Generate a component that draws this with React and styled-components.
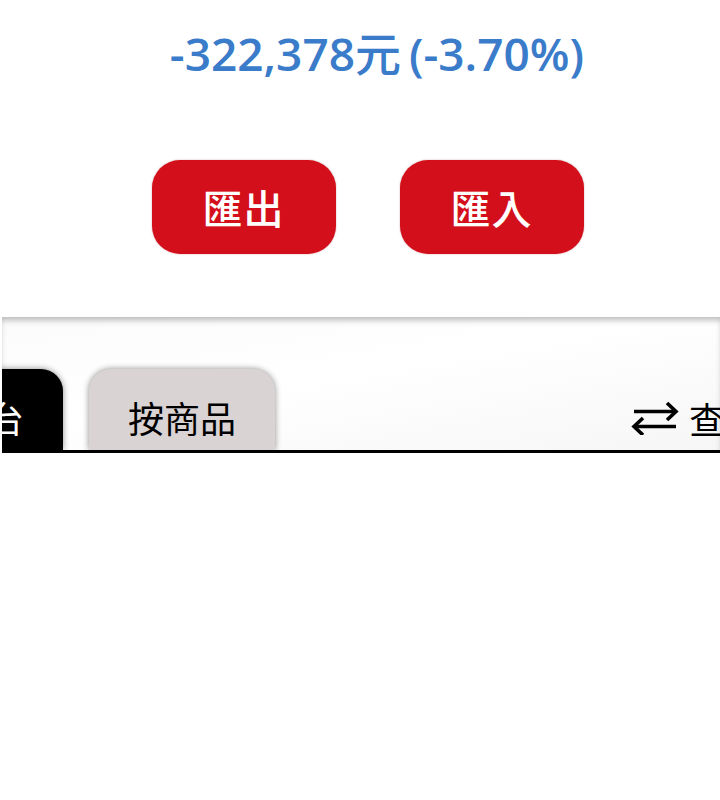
import styled, { createGlobalStyle } from 'styled-components';

const GlobalStyle = createGlobalStyle`
  html, body {
    margin: 0;
    padding: 0;
    background: #ffffff;
  }
  body {
    font-family: "Noto Sans CJK TC", "Noto Sans", sans-serif;
    overflow: hidden;
  }
`;

const Page = styled.div`
  width: 720px;
  height: 800px;
  display: flex;
  flex-direction: column;
  background: #ffffff;
`;

const Change = styled.div`
  margin-top: 25px;
  height: 56px;
  padding-left: 34px;
  text-align: center;
  font-family: "Open Sans", "Noto Sans CJK TC", sans-serif;
  font-weight: 600;
  font-size: 46px;
  line-height: 56px;
  color: #3a7cca;
  white-space: nowrap;
`;

const Unit = styled.span`
  font-family: "Noto Sans CJK TC", sans-serif;
  font-weight: 500;
  line-height: 1;
  margin-right: -4px;
`;

const ButtonRow = styled.div`
  margin-top: 79px;
  padding-left: 15px;
  display: flex;
  justify-content: center;
  gap: 64px;
`;

const RedButton = styled.button`
  width: 184px;
  height: 94px;
  border: none;
  border-radius: 28px;
  background: #d40f1c;
  color: #ffffff;
  font-family: "Noto Sans CJK TC", sans-serif;
  font-weight: 500;
  font-size: 40px;
  letter-spacing: 1px;
  padding: 0;
  display: flex;
  align-items: center;
  justify-content: center;
  box-shadow: 0 0 2px rgba(120, 0, 0, 0.35);
`;

const Strip = styled.div`
  margin-top: 63px;
  margin-left: 2px;
  height: 133px;
  display: flex;
  align-items: flex-end;
  overflow: hidden;
  background: linear-gradient(170deg, #fbfbfb 0%, #ffffff 45%, #f6f6f6 100%);
  box-shadow: inset 0 5px 6px -2px rgba(0, 0, 0, 0.28);
  border-bottom: 3px solid #000000;
`;

const Tab = styled.div`
  flex: none;
  width: 186px;
  height: 81px;
  margin-left: ${(p) => p.$offset || 0}px;
  border-radius: 22px 22px 0 0;
  background: ${(p) => (p.$active ? '#000000' : '#d9d3d4')};
  color: ${(p) => (p.$active ? '#ffffff' : '#000000')};
  box-shadow: 0 0 6px rgba(0, 0, 0, 0.45);
  display: flex;
  align-items: center;
  justify-content: center;
  font-family: "Noto Sans CJK TC", sans-serif;
  font-size: 36px;
  font-weight: 400;
  padding-top: 14px;
  box-sizing: border-box;
`;

const Switcher = styled.div`
  flex: none;
  margin-left: 356px;
  height: 81px;
  display: flex;
  align-items: center;
  gap: 10px;
  padding-top: 16px;
  box-sizing: border-box;
  font-family: "Noto Sans CJK TC", sans-serif;
  font-size: 36px;
  color: #000000;
  white-space: nowrap;
`;

const SwapIcon = () => (
  <svg width="48" height="34" viewBox="0 0 48 34" fill="none" stroke="#000" strokeWidth="3.6" strokeLinecap="butt" strokeLinejoin="miter">
    <path d="M3 10.5 H45" />
    <path d="M36 2 L45 10.5 L36 19" />
    <path d="M3 25.5 H45" />
    <path d="M12 17 L3 25.5 L12 34" />
  </svg>
);

export default function App() {
  return (
    <Page>
      <GlobalStyle />
      <Change>-322,378<Unit>元</Unit> (-3.70%)</Change>
      <ButtonRow>
        <RedButton>匯出</RedButton>
        <RedButton>匯入</RedButton>
      </ButtonRow>
      <Strip>
        <Tab $active $offset={-125}>按平台</Tab>
        <Tab $offset={26}>按商品</Tab>
        <Switcher>
          <SwapIcon />
          查詢
        </Switcher>
      </Strip>
    </Page>
  );
}
